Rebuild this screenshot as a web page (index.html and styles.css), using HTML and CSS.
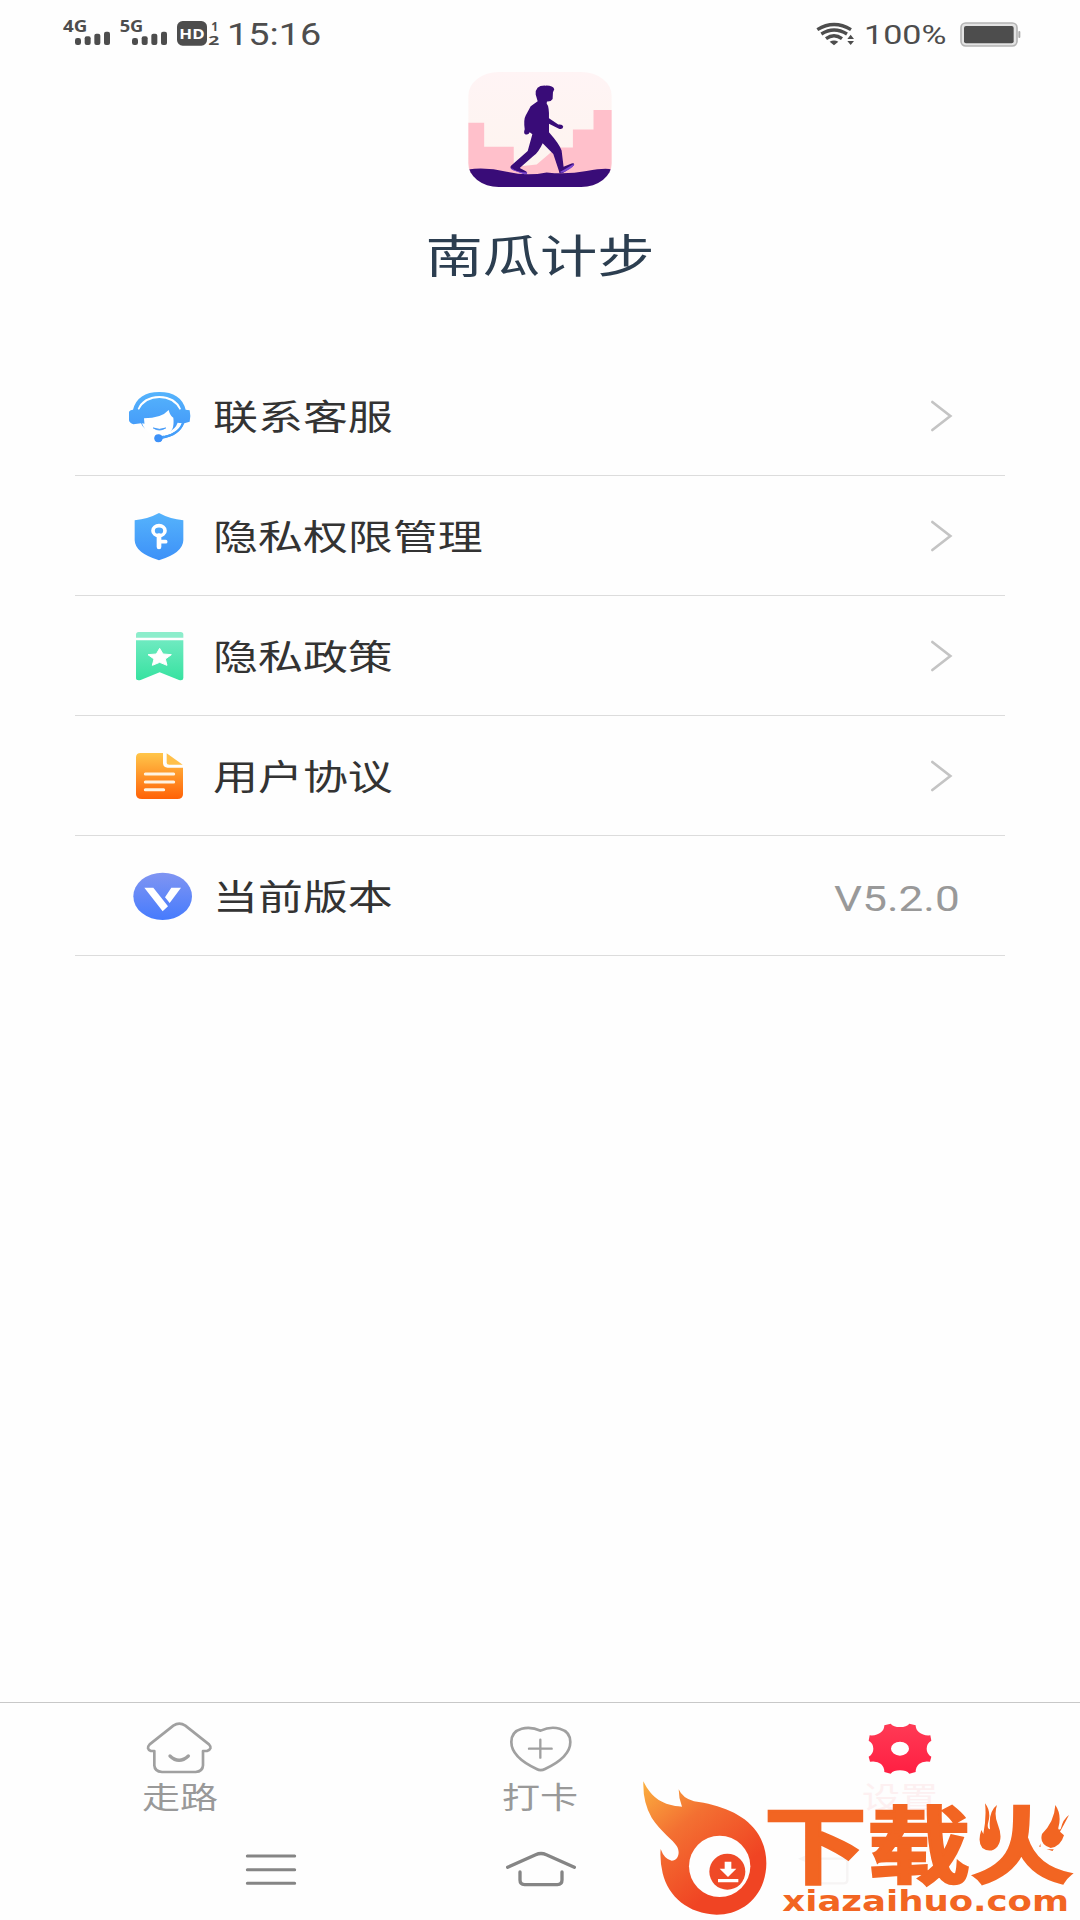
FILE: index.html
```html
<!DOCTYPE html>
<html lang="zh-CN">
<head>
<meta charset="utf-8">
<title>南瓜计步</title>
<link rel="stylesheet" href="styles.css">
</head>
<body>
<div class="screen">
  <header class="status">
    <svg class="signals" viewBox="60 30 480 150">
      <g fill="#4d4d4d">
        <text class="tiny" x="69" y="96" font-size="47" textLength="73" lengthAdjust="spacingAndGlyphs">4G</text>
        <rect x="105" y="114" width="18" height="21" rx="7"/><rect x="134" y="109" width="18" height="26" rx="6"/><rect x="163" y="101" width="18" height="34" rx="6"/><rect x="192" y="95" width="18" height="40" rx="6"/>
        <text class="tiny" x="239" y="96" font-size="47" textLength="71" lengthAdjust="spacingAndGlyphs">5G</text>
        <rect x="276" y="114" width="18" height="21" rx="7"/><rect x="305" y="109" width="18" height="26" rx="6"/><rect x="334" y="101" width="18" height="34" rx="6"/><rect x="363" y="95" width="18" height="40" rx="6"/>
        <rect x="411" y="63" width="90" height="74" rx="17"/>
        <text class="tiny" x="514" y="92" font-size="36">1</text>
        <text class="tiny" x="505" y="134" font-size="38" textLength="33" lengthAdjust="spacingAndGlyphs">2</text>
      </g>
      <text class="tiny" x="418" y="116" font-size="45" fill="#fff" textLength="76" lengthAdjust="spacingAndGlyphs">HD</text>
    </svg>
    <span class="clock">15:16</span>
    <svg class="wifi" viewBox="72 60 120 90">
      <g fill="none" stroke="#4d4d4d" stroke-width="10">
        <path d="M79 89Q129 58 180 89M91 102Q129 78 168 102M105 116Q129 98 153 116"/>
      </g>
      <path d="M116 125Q129 118 142 125L129 136ZM169 117L179 104 189 117ZM169 123L179 135 189 123Z" fill="#4d4d4d"/>
    </svg>
    <span class="percent">100%</span>
    <svg class="battery" viewBox="506 54 192 90">
      <rect x="512" y="66" width="168" height="69" rx="14" fill="#e3e3e3" stroke="#b4b4b4" stroke-width="5"/>
      <rect x="521" y="75" width="149" height="52" rx="6" fill="#4d4d4d"/>
      <rect x="684" y="90" width="6" height="21" rx="3" fill="#aaa"/>
    </svg>
  </header>

  <main class="content">
    <section class="brand">
      <svg class="app-icon" viewBox="204 36 432 346">
        <defs>
          <linearGradient id="sky" x2="0" y2="1"><stop stop-color="#fff4f5"/><stop offset="1" stop-color="#fdf4ee"/></linearGradient>
          <clipPath id="tile"><rect x="204" y="36" width="432" height="346" rx="92" ry="72"/></clipPath>
        </defs>
        <g clip-path="url(#tile)">
          <rect x="204" y="36" width="432" height="346" fill="url(#sky)"/>
          <path d="M204 189H252V261H341V322L410 314 470 263H519V209H581V150H636V345H204Z" fill="#ffc0cb"/>
          <path d="M204 329Q260 322 320 336T440 338Q500 345 560 334T636 330V382H204Z" fill="#390c78"/>
          <g fill="#390c78">
            <path d="M407 104Q405 76 436 77Q459 76 463 88L459 97 458 117Q453 126 441 125L440 131Q448 140 447 175L475 194Q488 192 490 201Q488 210 477 207L447 192V217Q478 252 485 272L491 321 515 311Q528 309 520 319L496 335Q483 344 478 339L477 334 460 283 428 250Q416 277 400 289L359 325 379 335Q385 344 373 343L337 330Q329 327 332 319L383 274 397 223 389 217Q385 227 375 223Q370 219 374 208Q370 179 377 167L392 139 413 124Z"/>
          </g>
          <path d="M332 323Q350 338 382 338Q382 345 370 343L337 331ZM480 337Q500 326 522 312Q523 322 499 334Q485 343 480 337Z" fill="#7c48d1"/>
        </g>
      </svg>
      <h1 class="title">南瓜计步</h1>
    </section>

    <ul class="menu">
      <li class="row">
        <svg class="row-icon" viewBox="174 48 192 180">
          <defs><linearGradient id="blue" x2="0" y2="1"><stop stop-color="#55b3fc"/><stop offset="1" stop-color="#3d91f8"/></linearGradient></defs>
          <path d="M189 119Q203 66 268 66Q333 66 347 119L359 121Q363 138 359 155L343 160Q328 198 278 206Q274 217 263 216Q253 213 254 202Q258 192 271 195L276 198Q323 190 335 160L323 158Q316 178 294 186H243Q219 176 213 160L190 163Q178 159 177 151V125Q181 119 189 119Z" fill="url(#blue)"/>
          <path d="M203 117Q217 80 268 78Q319 80 333 117L329 119Q309 84 268 84Q227 84 207 119Z" fill="#fff"/>
          <path d="M222 145Q274 145 296 120Q300 137 310 143Q315 187 288 190H240Q222 175 222 145ZM216 160L230 163 240 188Q222 180 216 160ZM330 160H337Q328 188 282 198L280 193Q318 186 330 160Z" fill="#fff"/>
          <path d="M250 174Q268 182 287 174Q268 186 250 174Z" fill="#4a9df8" stroke="#4a9df8" stroke-width="3"/>
          <path d="M338 160Q326 194 272 203" fill="none" stroke="#459ff9" stroke-width="6"/>
          <circle cx="265" cy="205" r="12" fill="#3d91f8"/>
        </svg>
        <span class="label">联系客服</span>
        <svg class="chevron" viewBox="450 84 72 108"><path d="M457 96L511 138 457 180"/></svg>
      </li>
      <li class="row">
        <svg class="row-icon" viewBox="174 408 192 180">
          <path d="M267 429Q300 447 340 451V511Q339 549 267 571Q195 549 194 511V451Q234 447 267 429Z" fill="url(#blue)"/>
          <g fill="none" stroke="#fff"><ellipse cx="267" cy="482" rx="18" ry="15" stroke-width="11"/><path d="M267 497V531" stroke-width="14" stroke-linecap="round"/><path d="M271 515H287" stroke-width="11" stroke-linecap="round"/></g>
        </svg>
        <span class="label">隐私权限管理</span>
        <svg class="chevron" viewBox="450 84 72 108"><path d="M457 96L511 138 457 180"/></svg>
      </li>
      <li class="row">
        <svg class="row-icon" viewBox="174 48 192 180">
          <defs><linearGradient id="green" x2="0" y2="1"><stop stop-color="#6eeac0"/><stop offset="1" stop-color="#37e2a0"/></linearGradient></defs>
          <path d="M198 83V74Q198 66 206 66H332Q340 66 340 74V83Z" fill="#8cedcb"/>
          <path d="M198 91H340V204Q340 213 327 210L269 187 212 210Q198 213 198 204Z" fill="url(#green)"/>
          <path d="M269 115L279 132 304 134 286 147 291 166 269 157 247 166 252 147 234 134 259 132Z" fill="#fff" stroke="#fff" stroke-width="3" stroke-linejoin="round"/>
        </svg>
        <span class="label">隐私政策</span>
        <svg class="chevron" viewBox="450 84 72 108"><path d="M457 96L511 138 457 180"/></svg>
      </li>
      <li class="row">
        <svg class="row-icon" viewBox="174 408 192 180">
          <defs><linearGradient id="orange" x2="0" y2="1"><stop stop-color="#ffc64a"/><stop offset="1" stop-color="#ff6207"/></linearGradient></defs>
          <path d="M212 429H279V460Q280 473 293 473H339V553Q339 567 322 567H216Q198 567 198 553V442Q198 429 212 429Z" fill="url(#orange)"/>
          <path d="M290 430L338 464H298Q290 464 290 458Z" fill="#ffc04a"/>
          <path d="M226 492H311M226 516H311M226 539H281" stroke="#fff3e2" stroke-width="9" stroke-linecap="round"/>
        </svg>
        <span class="label">用户协议</span>
        <svg class="chevron" viewBox="450 84 72 108"><path d="M457 96L511 138 457 180"/></svg>
      </li>
      <li class="row">
        <svg class="row-icon" viewBox="174 108 192 180">
          <defs><linearGradient id="violet" x2="0" y2="1"><stop stop-color="#8095f2"/><stop offset="1" stop-color="#467bfd"/></linearGradient></defs>
          <ellipse cx="278" cy="199" rx="88" ry="71" fill="url(#violet)"/>
          <path d="M223 173H250L294 229 278 244ZM304 173H333L299 219 285 202Z" fill="#fff"/>
        </svg>
        <span class="label">当前版本</span>
        <span class="version">V5.2.0</span>
      </li>
    </ul>
  </main>

  <nav class="tabs">
    <a class="tab">
      <svg class="tab-icon" viewBox="132 84 216 180"><g class="line">
        <path d="M163 183H153Q137 176 149 163L220 107Q238 95 256 107L327 163Q339 176 321 183H309V226Q308 244 287 246H186Q164 244 163 226Z" stroke-width="8"/><path d="M210 198Q237 224 265 198" stroke-width="10"/></g></svg>
      <span>走路</span>
    </a>
    <a class="tab">
      <svg class="tab-icon" viewBox="1212 84 216 180"><g class="line">
        <path d="M1322 122C1287 106 1234 111 1234 156C1234 190 1263 215 1310 237Q1322 244 1335 237C1382 215 1411 190 1411 156C1411 111 1356 106 1322 122Z" stroke-width="8"/><path d="M1321 149V203M1287 176H1355" stroke-width="7"/></g></svg>
      <span>打卡</span>
    </a>
    <a class="tab active">
      <svg class="tab-icon" viewBox="72 84 216 180">
        <defs><linearGradient id="red" x2="0" y2="1"><stop stop-color="#ff3a55"/><stop offset="1" stop-color="#ff1f42"/></linearGradient></defs>
        <path fill="url(#red)" fill-rule="evenodd" d="M133 106L152 101Q160 111 180 111T208 101L227 106Q227 119 237 127Q250 138 271 136L274 152Q260 160 260 176T274 200L270 215Q248 212 237 222Q227 231 227 246L208 251Q199 241 180 241T152 251L133 246Q133 231 123 222Q112 212 90 215L86 200Q100 192 100 176T86 152L89 136Q110 138 123 127Q133 119 133 106ZM153 176A27 21 0 1 0 207 176A27 21 0 1 0 153 176Z"/>
      </svg>
      <span>设置</span>
    </a>
  </nav>

  <footer class="system">
    <svg viewBox="375 420 270 270"><path d="M442 498H584M442 539H584M442 580H584"/></svg>
    <svg viewBox="1185 420 270 270"><path d="M1223 532L1307 494Q1323 487 1339 494L1423 532M1260 546V570Q1260 583 1274 584H1372Q1386 583 1386 570V546" stroke-width="10"/></svg>
    <svg class="faint" viewBox="435 420 270 270"><path d="M580 490L543 506 580 523M543 506H670Q682 506 682 518V570Q682 580 670 580H560"/></svg>
  </footer>

  <svg class="watermark" viewBox="30 240 1350 450">
    <defs>
      <linearGradient id="flame" x1="0" y1="0" x2=".6" y2=".8"><stop stop-color="#fbb040"/><stop offset=".45" stop-color="#f37032"/><stop offset="1" stop-color="#f04423"/></linearGradient>
    </defs>
    <path d="M70 274C95 325 130 347 186 350Q176 325 176 298Q188 325 222 334C300 345 370 370 410 425C440 468 447 525 430 575C408 640 350 674 290 674C205 672 145 620 128 550Q119 510 122 477Q133 508 155 512C175 512 182 487 170 468C160 450 122 425 95 383Q68 337 70 274Z" fill="url(#flame)"/>
    <ellipse cx="299" cy="529" rx="92" ry="92" fill="#fefefe"/>
    <circle cx="322" cy="545" r="54" fill="#ef4a27"/>
    <path d="M314 515H334V536H349L324 561 299 536H314ZM294 567H355V577H294Z" fill="#fff"/>
    <text class="wm-name" transform="translate(431 0) scale(1.235 1)" x="0" y="561">下载火</text>
    <path d="M1058 335H1165V420L1150 490H1058ZM1256 335H1375V478H1262Z" fill="#fefefe"/>
    <path d="M1095 340Q1115 365 1104 400Q1101 416 1110 418Q1104 365 1131 345Q1121 375 1134 405Q1150 445 1132 470Q1112 491 1087 474Q1072 456 1084 420L1090 432Q1100 380 1095 340ZM1306 345Q1325 373 1316 409Q1312 423 1322 417Q1329 387 1347 375Q1332 404 1320 425L1332 436Q1322 470 1292 474Q1257 464 1266 432Q1303 395 1306 345Z" fill="#f26522"/>
    <text class="wm-site" x="487" y="664" textLength="860" lengthAdjust="spacingAndGlyphs">xiazaihuo.com</text>
  </svg>
</div>
</body>
</html>
```
FILE: styles.css
```css
* { box-sizing: border-box; }

body {
  margin: 0;
  background: #fefefe;
  font-family: "Noto Sans", "Noto Sans CJK SC", sans-serif;
  color: #333;
}

svg { display: block; flex: none; }

.screen {
  position: relative;
  display: flex;
  flex-direction: column;
  width: 1080px;
  height: 1920px;
  overflow: hidden;
}

/* Status bar */
.status {
  display: flex;
  align-items: center;
  height: 68px;
  padding: 0 57px 0 60px;
  font-family: Roboto, sans-serif;
  color: #4d4d4d;
}

.signals { width: 160px; height: 50px; margin-top: 2px; }
.tiny { font-family: "Open Sans", sans-serif; font-weight: 700; }

.clock {
  width: 120px;
  margin-left: 7px;
  margin-top: 1px;
  font-size: 31px;
  line-height: 36px;
  transform: scaleX(1.22);
  transform-origin: left;
}

.wifi { width: 40px; height: 30px; margin-left: auto; margin-top: 2px; }

.percent {
  width: 90px;
  margin-left: 9px;
  margin-top: 2px;
  font-size: 26px;
  line-height: 30px;
  transform: scaleX(1.31);
  transform-origin: left;
}

.battery { width: 64px; height: 30px; margin-left: 5px; }

/* App header */
.content { flex: 1; }

.brand {
  display: flex;
  flex-direction: column;
  align-items: center;
  height: 288px;
  padding-top: 4px;
}

.app-icon { width: 144px; height: 115px; }

.title {
  margin: 32px 0 0;
  font: 400 45px/70px "Noto Sans CJK SC", sans-serif;
  color: #2c3e50;
  transform: scaleX(1.273);
}

/* Settings list */
.menu {
  margin: 0 75px;
  padding: 0;
  list-style: none;
}

.row {
  display: flex;
  align-items: center;
  height: 120px;
  padding: 0 51px 0 53px;
  border-bottom: 1px solid #dcdcdc;
}

.row-icon { width: 64px; height: 60px; }

.label {
  margin: 0 0 1px 21px;
  font: 400 35px/54px "Noto Sans CJK SC", sans-serif;
  transform: scaleX(1.284);
  transform-origin: left;
}

.chevron {
  width: 24px;
  height: 36px;
  margin-left: auto;
  fill: none;
  stroke: #c4c4c4;
  stroke-width: 8;
  stroke-linecap: round;
}

.version {
  margin: 8px -6px 0 auto;
  font: 400 35px/54px Roboto, sans-serif;
  color: #999;
  transform: scaleX(1.26);
  transform-origin: right;
}

/* Bottom tabs */
.tabs {
  display: flex;
  height: 128px;
  border-top: 1px solid #c8c8c8;
}

.tab {
  flex: 1;
  display: flex;
  flex-direction: column;
  align-items: center;
  padding-top: 15px;
  font: 400 30px/34px "Noto Sans CJK SC", sans-serif;
  color: #999;
}

.tab span { transform: scaleX(1.27); }
.tab.active { color: #fdf0f1; }
.tab-icon { width: 72px; height: 60px; }
.line { fill: none; stroke: #a0a0a0; stroke-linecap: round; stroke-linejoin: round; }

/* System navigation */
.system {
  display: flex;
  justify-content: space-between;
  height: 90px;
  padding: 0 225px;
}

.system svg {
  width: 90px;
  height: 90px;
  fill: none;
  stroke: #858585;
  stroke-width: 9;
  stroke-linecap: round;
}

.system .faint { stroke: #f6f4f4; stroke-width: 7; }

/* Download-site badge laid over the bottom bars */
.watermark {
  position: absolute;
  right: 0;
  bottom: 0;
  width: 450px;
  height: 150px;
}

.wm-name {
  font: 700 251px "Noto Sans CJK SC", sans-serif;
  fill: #f26522;
  stroke: #f26522;
  stroke-width: 7;
}

.wm-site {
  font: 700 86px "DejaVu Sans", sans-serif;
  fill: #f26522;
}
```
